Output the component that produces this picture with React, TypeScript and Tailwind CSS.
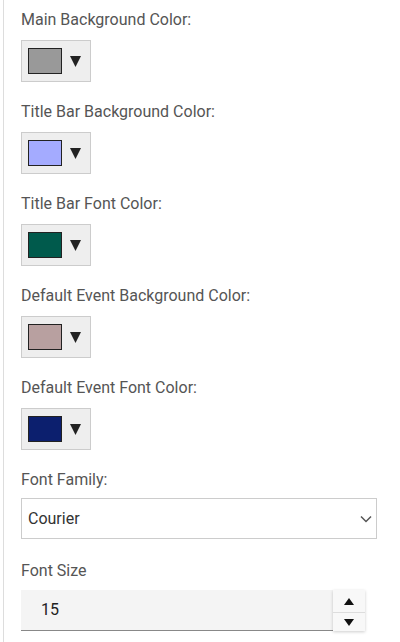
const colorFields = [
  { label: 'Main Background Color:', color: '#999999' },
  { label: 'Title Bar Background Color:', color: '#a4abff' },
  { label: 'Title Bar Font Color:', color: '#005a4c' },
  { label: 'Default Event Background Color:', color: '#b8a0a0' },
  { label: 'Default Event Font Color:', color: '#0c1f6e' },
];

function Triangle({ down, w, h, color }: { down?: boolean; w: number; h: number; color: string }) {
  return (
    <svg width={w} height={h} viewBox={`0 0 ${w} ${h}`}>
      <path d={down ? `M0 0 L${w} 0 L${w / 2} ${h} Z` : `M0 ${h} L${w} ${h} L${w / 2} 0 Z`} fill={color} />
    </svg>
  );
}

function ColorPicker({ color }: { color: string }) {
  return (
    <button className="flex h-[42px] w-[70px] items-center gap-[8px] border border-[#cccccc] bg-[#eeeeee] pl-[6px]">
      <span className="h-[26px] w-[34px] border border-[#222222]" style={{ backgroundColor: color }} />
      <span className="mt-[1px]">
        <Triangle down w={11} h={11} color="#222222" />
      </span>
    </button>
  );
}

export default function App() {
  return (
    <div className="min-h-[642px] w-[400px] bg-white font-['Roboto',sans-serif]">
      <div className="ml-[3px] min-h-[642px] border-l border-[#dddddd] pl-[17px] pr-[23px] pt-[10px]">
        {colorFields.map((f) => (
          <div key={f.label} className="mb-[20px]">
            <div className="text-[16px] leading-[20px] text-[#555555]">{f.label}</div>
            <div className="mt-[10px]">
              <ColorPicker color={f.color} />
            </div>
          </div>
        ))}

        <div className="mt-[7px] text-[16px] leading-[20px] text-[#555555]">Font Family:</div>
        <div className="relative mt-[8px] h-[41px] w-[356px] border border-[#cccccc] bg-white">
          <div className="flex h-full items-center pl-[6px] text-[16px] text-[#333333]">Courier</div>
          <svg className="absolute right-[4px] top-[16px]" width="12" height="8" viewBox="0 0 12 8">
            <path d="M1 1.5 L6 6.5 L11 1.5" fill="none" stroke="#555555" strokeWidth="1.5" />
          </svg>
        </div>

        <div className="mt-[22px] text-[16px] leading-[20px] text-[#555555]">Font Size</div>
        <div className="relative mt-[9px] flex h-[41px] w-[344px] items-center border-b border-[#888888] bg-[#f4f4f4] pl-[20px] text-[16px] text-[#222222]">
          15
          <div className="absolute right-0 top-0 flex w-[32px] flex-col bg-[#f8f8f8] shadow-[0_1px_3px_rgba(0,0,0,0.2)]">
            <div className="flex h-[23px] items-center justify-center border-b border-[#dddddd]">
              <Triangle w={10} h={7} color="#111111" />
            </div>
            <div className="flex h-[18px] items-center justify-center">
              <Triangle down w={10} h={7} color="#111111" />
            </div>
          </div>
        </div>
      </div>
    </div>
  );
}
